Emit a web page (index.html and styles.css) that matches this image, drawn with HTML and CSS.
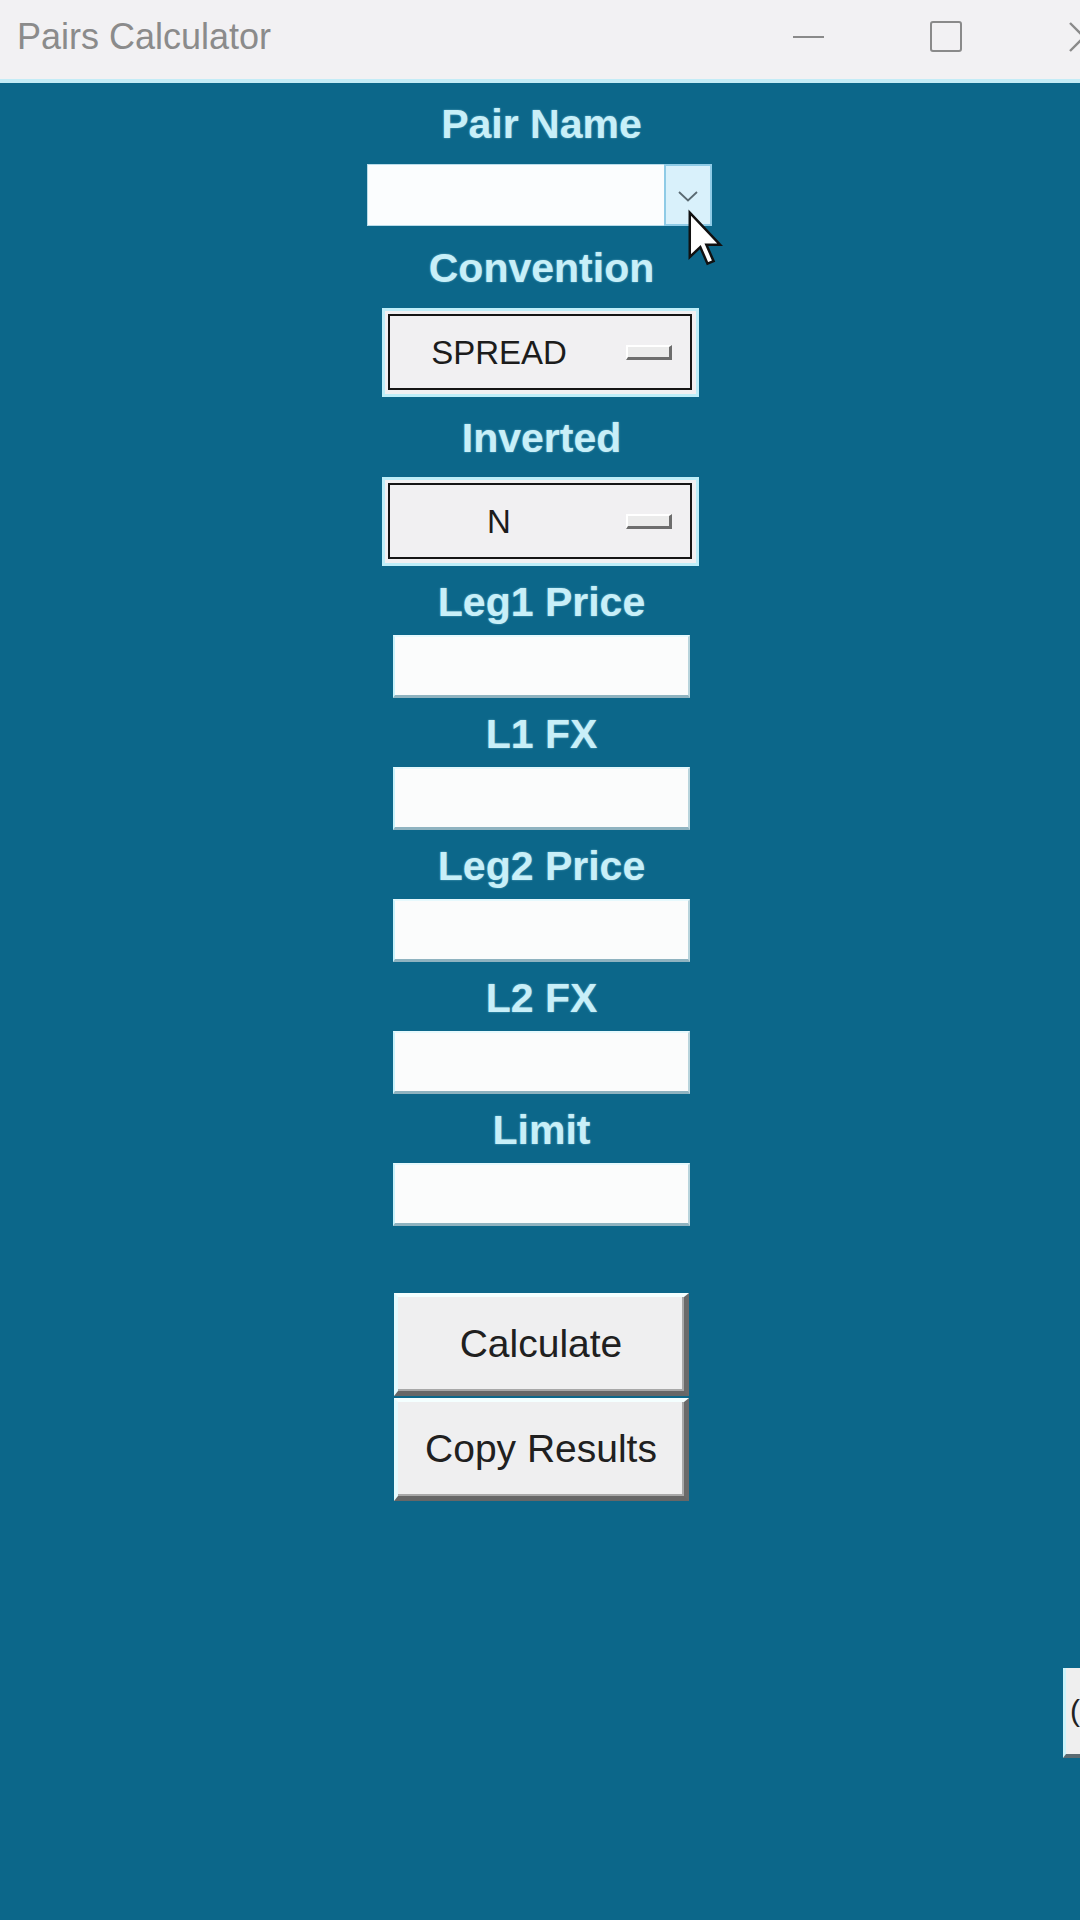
FILE: index.html
```html
<!DOCTYPE html>
<html>
<head>
<meta charset="utf-8">
<title>Pairs Calculator</title>
<link rel="stylesheet" href="styles.css">
</head>
<body>
<div class="titlebar">
  <div class="titlebar-inner">
    <div class="title">Pairs Calculator</div>
    <div class="cap-btn"><span class="min-line"></span></div>
    <div class="cap-btn"><span class="max-box"></span></div>
    <div class="cap-btn">
      <svg class="close-x" width="32" height="32" viewBox="0 0 32 32"><path d="M2 2 L30 30 M30 2 L2 30" stroke="#8a8a8a" stroke-width="2.4" fill="none"/></svg>
    </div>
  </div>
</div>

<main class="form">
  <div class="label first">Pair Name</div>
  <div class="combo">
    <div class="combo-field"></div>
    <div class="combo-btn">
      <svg width="20" height="11" viewBox="0 0 20 11"><polyline points="1,1 10,9.5 19,1" fill="none" stroke="#5a6a72" stroke-width="1.8"/></svg>
    </div>
  </div>

  <div class="label gap-opt">Convention</div>
  <div class="optmenu">
    <div class="optmenu-inner">
      <span class="opt-text">SPREAD</span>
      <span class="opt-ind"></span>
    </div>
  </div>

  <div class="label gap-opt2">Inverted</div>
  <div class="optmenu optmenu-n">
    <div class="optmenu-inner">
      <span class="opt-text">N</span>
      <span class="opt-ind"></span>
    </div>
  </div>

  <div class="label gap-field">Leg1 Price</div>
  <div class="entry"></div>
  <div class="label gap-field">L1 FX</div>
  <div class="entry"></div>
  <div class="label gap-field">Leg2 Price</div>
  <div class="entry"></div>
  <div class="label gap-field">L2 FX</div>
  <div class="entry"></div>
  <div class="label gap-field">Limit</div>
  <div class="entry"></div>

  <div class="btn btn-first">Calculate</div>
  <div class="btn btn-second">Copy Results</div>
</main>

<div class="side-widget"><span class="side-glyph">(</span></div>

<svg class="cursor" width="36" height="60" viewBox="0 0 13 21">
  <path d="M1 1 L1 17 L4.8 13.4 L7.4 19.4 L9.6 18.5 L7 12.6 L12 12.6 Z" fill="#ffffff" stroke="#111" stroke-width="0.9" stroke-linejoin="miter"/>
</svg>
</body>
</html>
```

FILE: styles.css
```css
html, body {
  margin: 0;
  padding: 0;
}
body {
  width: 1080px;
  height: 1920px;
  overflow: hidden;
  position: relative;
  background: #0c678a;
  font-family: "Liberation Sans", Arial, sans-serif;
}

/* ---------- title bar ---------- */
.titlebar {
  height: 79px;
  background: #f2f1f3;
  border-bottom: 4px solid #c4ecf6;
  overflow: hidden;
}
.titlebar-inner {
  width: 1153px;
  height: 79px;
  display: grid;
  grid-template-columns: 1fr 138px 138px 138px;
  align-items: center;
}
.title {
  padding-left: 17px;
  padding-bottom: 6px;
  font-size: 36px;
  color: #8b8b8b;
}
.cap-btn {
  display: flex;
  justify-content: center;
  align-items: center;
  height: 79px;
  padding-bottom: 6px;
  box-sizing: border-box;
}
.min-line {
  width: 31px;
  height: 2px;
  background: #8a8a8a;
}
.max-box {
  width: 28px;
  height: 27px;
  border: 2px solid #8a8a8a;
  border-radius: 3px;
}

/* ---------- form ---------- */
.form {
  display: flex;
  flex-direction: column;
  align-items: center;
  padding-left: 3px;
}
.label {
  height: 48px;
  line-height: 48px;
  font-size: 41px;
  font-weight: bold;
  color: #c8eff8;
  text-shadow: 0 0 2px rgba(190, 240, 255, 0.55);
  white-space: nowrap;
}
.label.first { margin-top: 17px; }
.label.gap-opt { margin-top: 18px; }
.label.gap-opt2 { margin-top: 17px; }
.label.gap-field { margin-top: 12px; }

/* combobox */
.combo {
  margin-top: 16px;
  margin-left: -5px;
  width: 345px;
  height: 62px;
  display: flex;
  box-sizing: border-box;
}
.combo-field {
  flex: 1;
  background: #fbfdfe;
  border: 1px solid #b9dcea;
  border-right: none;
}
.combo-btn {
  width: 48px;
  box-sizing: border-box;
  background: #d9f1fb;
  border: 2px solid #8fcbe6;
  display: flex;
  align-items: center;
  justify-content: center;
  padding-top: 2px;
}

/* option menus */
.optmenu {
  width: 317px;
  height: 89px;
  box-sizing: border-box;
  border: 3px solid #bfeef9;
  background: #f1f0f2;
  padding: 3px 4px 4px 3px;
  margin-top: 16px;
  margin-left: -2px;
}
.optmenu-n { margin-top: 15px; }
.optmenu-inner {
  height: 100%;
  box-sizing: border-box;
  border: 2px solid #151515;
  display: flex;
  align-items: center;
}
.opt-text {
  flex: 1;
  text-align: center;
  font-size: 33px;
  color: #1c1c1c;
  padding-top: 1px;
}
.opt-ind {
  width: 46px;
  height: 15px;
  box-sizing: border-box;
  background: #ebebeb;
  border-top: 2px solid #ffffff;
  border-left: 2px solid #ffffff;
  border-bottom: 3px solid #6d6d6d;
  border-right: 3px solid #6d6d6d;
  margin-left: 18px;
  margin-right: 18px;
}

/* entries */
.entry {
  margin-top: 9px;
  width: 297px;
  height: 63px;
  box-sizing: border-box;
  background: #fbfcfc;
  border-top: 2px solid #e6f9fd;
  border-left: 2px solid #c9f3fc;
  border-right: 2px solid #b8d4dc;
  border-bottom: 3px solid #8fb3c0;
}

/* buttons */
.btn {
  width: 295px;
  height: 103px;
  box-sizing: border-box;
  background: #efeff0;
  border-top: 4px solid #f4ffff;
  border-left: 4px solid #e4fbff;
  border-bottom: 5px solid #676767;
  border-right: 5px solid #6a6a6a;
  box-shadow: inset -2px -2px 0 #a8a8a8;
  display: flex;
  align-items: center;
  justify-content: center;
  font-size: 39px;
  color: #202020;
  white-space: nowrap;
}
.btn-first { margin-top: 67px; }
.btn-second { margin-top: 2px; }

/* overlays */
.side-widget {
  position: absolute;
  left: 1063px;
  top: 1668px;
  width: 90px;
  height: 90px;
  box-sizing: border-box;
  background: #efefef;
  border-left: 3px solid #cdf4fb;
  border-bottom: 4px solid #5b6b72;
  padding-left: 4px;
  line-height: 86px;
  color: #222;
}
.side-glyph {
  font-size: 30px;
}
.cursor {
  position: absolute;
  left: 687px;
  top: 209px;
}
```
